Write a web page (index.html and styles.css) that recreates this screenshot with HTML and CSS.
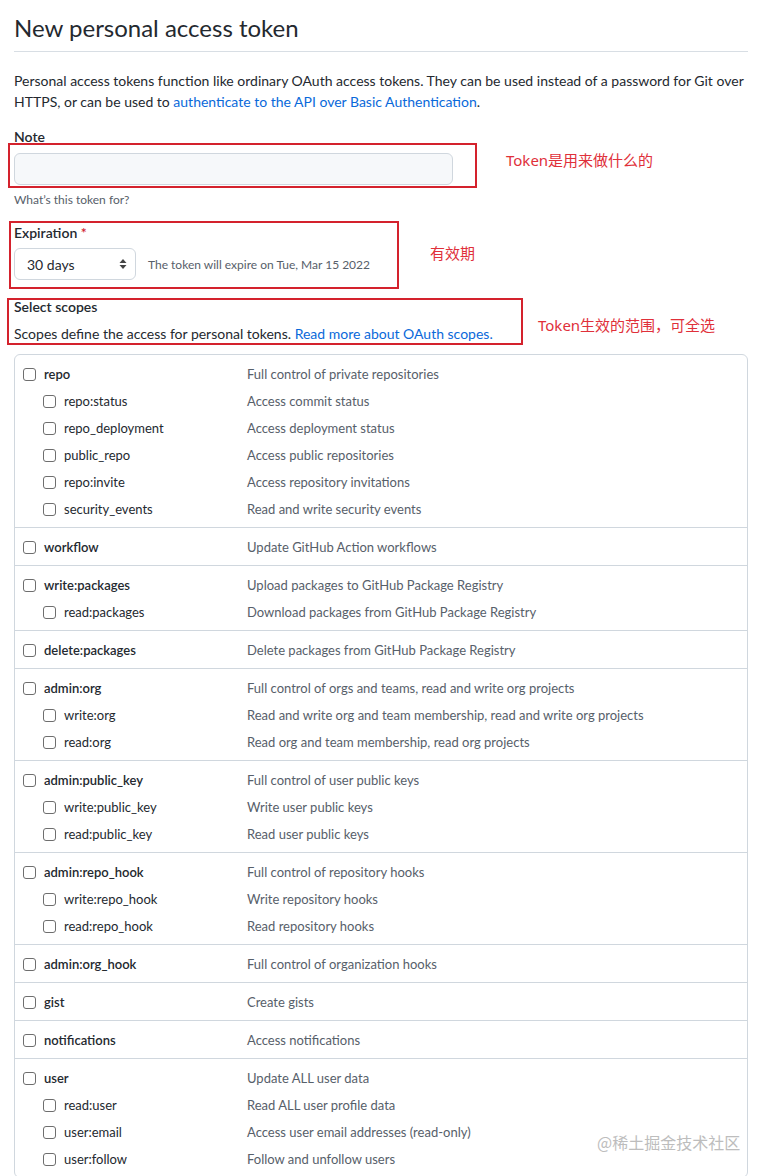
FILE: index.html
```html
<!DOCTYPE html>
<html lang="en">
<head>
<meta charset="utf-8">
<title>New personal access token</title>
<link rel="stylesheet" href="styles.css">
</head>
<body>
<div class="page">
  <div class="subhead"><h1 class="subhead-title">New personal access token</h1></div>
  <p class="intro">Personal access tokens function like ordinary OAuth access tokens. They can be used instead of a password for Git over HTTPS, or can be used to <a href="#" class="link">authenticate to the API over Basic Authentication</a>.</p>

  <label class="field-label note-label">Note</label>
  <div class="input"></div>
  <p class="hint">What’s this token for?</p>

  <label class="field-label exp-label">Expiration <span class="req">*</span></label>
  <div class="exp-row">
    <div class="select"><span>30 days</span>
      <svg class="select-arrow" width="8" height="14" viewBox="0 0 8 14"><path d="M4 2 L7.5 6 H0.5 Z M4 12 L7.5 8 H0.5 Z" fill="#444"/></svg>
    </div>
    <span class="exp-note">The token will expire on Tue, Mar 15 2022</span>
  </div>

  <div class="field-label scopes-label">Select scopes</div>
  <p class="scopes-desc">Scopes define the access for personal tokens. <a href="#" class="link">Read more about OAuth scopes.</a></p>

  <div class="scopes">
    <div class="group">
      <div class="row top"><span class="name"><input type="checkbox" class="cb">repo</span><span class="desc">Full control of private repositories</span></div>
      <div class="row sub"><span class="name"><input type="checkbox" class="cb">repo:status</span><span class="desc">Access commit status</span></div>
      <div class="row sub"><span class="name"><input type="checkbox" class="cb">repo_deployment</span><span class="desc">Access deployment status</span></div>
      <div class="row sub"><span class="name"><input type="checkbox" class="cb">public_repo</span><span class="desc">Access public repositories</span></div>
      <div class="row sub"><span class="name"><input type="checkbox" class="cb">repo:invite</span><span class="desc">Access repository invitations</span></div>
      <div class="row sub"><span class="name"><input type="checkbox" class="cb">security_events</span><span class="desc">Read and write security events</span></div>
    </div>
    <div class="group">
      <div class="row top"><span class="name"><input type="checkbox" class="cb">workflow</span><span class="desc">Update GitHub Action workflows</span></div>
    </div>
    <div class="group">
      <div class="row top"><span class="name"><input type="checkbox" class="cb">write:packages</span><span class="desc">Upload packages to GitHub Package Registry</span></div>
      <div class="row sub"><span class="name"><input type="checkbox" class="cb">read:packages</span><span class="desc">Download packages from GitHub Package Registry</span></div>
    </div>
    <div class="group">
      <div class="row top"><span class="name"><input type="checkbox" class="cb">delete:packages</span><span class="desc">Delete packages from GitHub Package Registry</span></div>
    </div>
    <div class="group">
      <div class="row top"><span class="name"><input type="checkbox" class="cb">admin:org</span><span class="desc">Full control of orgs and teams, read and write org projects</span></div>
      <div class="row sub"><span class="name"><input type="checkbox" class="cb">write:org</span><span class="desc">Read and write org and team membership, read and write org projects</span></div>
      <div class="row sub"><span class="name"><input type="checkbox" class="cb">read:org</span><span class="desc">Read org and team membership, read org projects</span></div>
    </div>
    <div class="group">
      <div class="row top"><span class="name"><input type="checkbox" class="cb">admin:public_key</span><span class="desc">Full control of user public keys</span></div>
      <div class="row sub"><span class="name"><input type="checkbox" class="cb">write:public_key</span><span class="desc">Write user public keys</span></div>
      <div class="row sub"><span class="name"><input type="checkbox" class="cb">read:public_key</span><span class="desc">Read user public keys</span></div>
    </div>
    <div class="group">
      <div class="row top"><span class="name"><input type="checkbox" class="cb">admin:repo_hook</span><span class="desc">Full control of repository hooks</span></div>
      <div class="row sub"><span class="name"><input type="checkbox" class="cb">write:repo_hook</span><span class="desc">Write repository hooks</span></div>
      <div class="row sub"><span class="name"><input type="checkbox" class="cb">read:repo_hook</span><span class="desc">Read repository hooks</span></div>
    </div>
    <div class="group">
      <div class="row top"><span class="name"><input type="checkbox" class="cb">admin:org_hook</span><span class="desc">Full control of organization hooks</span></div>
    </div>
    <div class="group">
      <div class="row top"><span class="name"><input type="checkbox" class="cb">gist</span><span class="desc">Create gists</span></div>
    </div>
    <div class="group">
      <div class="row top"><span class="name"><input type="checkbox" class="cb">notifications</span><span class="desc">Access notifications</span></div>
    </div>
    <div class="group">
      <div class="row top"><span class="name"><input type="checkbox" class="cb">user</span><span class="desc">Update ALL user data</span></div>
      <div class="row sub"><span class="name"><input type="checkbox" class="cb">read:user</span><span class="desc">Read ALL user profile data</span></div>
      <div class="row sub"><span class="name"><input type="checkbox" class="cb">user:email</span><span class="desc">Access user email addresses (read-only)</span></div>
      <div class="row sub"><span class="name"><input type="checkbox" class="cb">user:follow</span><span class="desc">Follow and unfollow users</span></div>
    </div>
  </div>

  <div class="mark mark-note"></div>
  <div class="mark mark-exp"></div>
  <div class="mark mark-scopes"></div>
  <div class="anno anno-note">Token是用来做什么的</div>
  <div class="anno anno-exp">有效期</div>
  <div class="anno anno-scopes">Token生效的范围，可全选</div>
  <div class="watermark">@稀土掘金技术社区</div>
</div>
</body>
</html>
```

FILE: styles.css
```css
html, body {
  margin: 0;
  padding: 0;
  background: #fff;
}
body {
  font-family: Lato, "Noto Sans", "Noto Sans CJK SC", sans-serif;
  color: #24292f;
  font-size: 14px;
  line-height: 21px;
}
.page {
  position: relative;
  width: 734px;
  padding-left: 14px;
  height: 1176px;
  overflow: hidden;
}
.subhead {
  padding: 10px 0 5px;
  border-bottom: 1px solid #d8dee4;
}
.subhead-title {
  margin: 0;
  font-size: 24px;
  line-height: 36px;
  font-weight: 400;
}
.intro {
  margin: 18px 0 0;
}
.link {
  color: #0969da;
  text-decoration: none;
}
.field-label {
  display: block;
  font-weight: 600;
  font-size: 14px;
  line-height: 21px;
}
.note-label { margin-top: 14px; }
.input {
  margin-top: 6px;
  width: 439px;
  height: 32px;
  box-sizing: border-box;
  background: #f6f8fa;
  border: 1px solid #d0d7de;
  border-radius: 6px;
}
.hint {
  margin: 6px 0 0;
  font-size: 12px;
  line-height: 18px;
  color: #57606a;
}
.exp-label { margin-top: 13px; }
.req { color: #cf222e; }
.exp-row {
  margin-top: 5px;
  display: flex;
  align-items: center;
  gap: 12px;
}
.select {
  width: 122px;
  height: 32px;
  box-sizing: border-box;
  border: 1px solid #d0d7de;
  border-radius: 6px;
  display: flex;
  align-items: center;
  justify-content: space-between;
  padding: 0 8px 0 12px;
  font-size: 14px;
}
.exp-note {
  font-size: 12px;
  color: #57606a;
}
.scopes-label { margin-top: 16px; }
.scopes-desc { margin: 6px 0 0; }
.scopes {
  margin-top: 10px;
  border: 1px solid #d0d7de;
  border-radius: 6px;
}
.group {
  padding: 6px 0 4px;
  border-top: 1px solid #d0d7de;
}
.group:first-child { border-top: 0; }
.row {
  display: grid;
  grid-template-columns: 224px 1fr;
  height: 27px;
  align-items: center;
  font-size: 13px;
  padding-left: 8px;
}
.row.sub {
  padding-left: 28px;
  grid-template-columns: 204px 1fr;
}
.name {
  display: flex;
  align-items: center;
  gap: 8px;
}
.row.top .name { font-weight: 600; }
.desc { color: #57606a; }
.cb {
  appearance: none;
  -webkit-appearance: none;
  margin: 0;
  width: 13px;
  height: 13px;
  box-sizing: border-box;
  border: 1px solid #6e6e6e;
  border-radius: 3px;
  background: #fff;
}
.mark {
  position: absolute;
  box-sizing: border-box;
  border: 2px solid #d4222d;
}
.mark-note { left: 8px; top: 143px; width: 469px; height: 45px; }
.mark-exp { left: 9px; top: 221px; width: 390px; height: 68px; }
.mark-scopes { left: 7px; top: 298px; width: 516px; height: 47px; }
.anno {
  position: absolute;
  color: #e0303a;
  font-size: 15px;
  line-height: 20px;
  font-family: "Noto Sans", "Noto Sans CJK SC", sans-serif;
}
.anno-note { left: 506px; top: 150px; }
.anno-exp { left: 430px; top: 243px; }
.anno-scopes { left: 538px; top: 315px; }
.watermark {
  position: absolute;
  left: 597px;
  top: 1131px;
  font-size: 16px;
  line-height: 22px;
  color: #bdbdbd;
  font-family: "Noto Sans CJK SC", sans-serif;
}
```
